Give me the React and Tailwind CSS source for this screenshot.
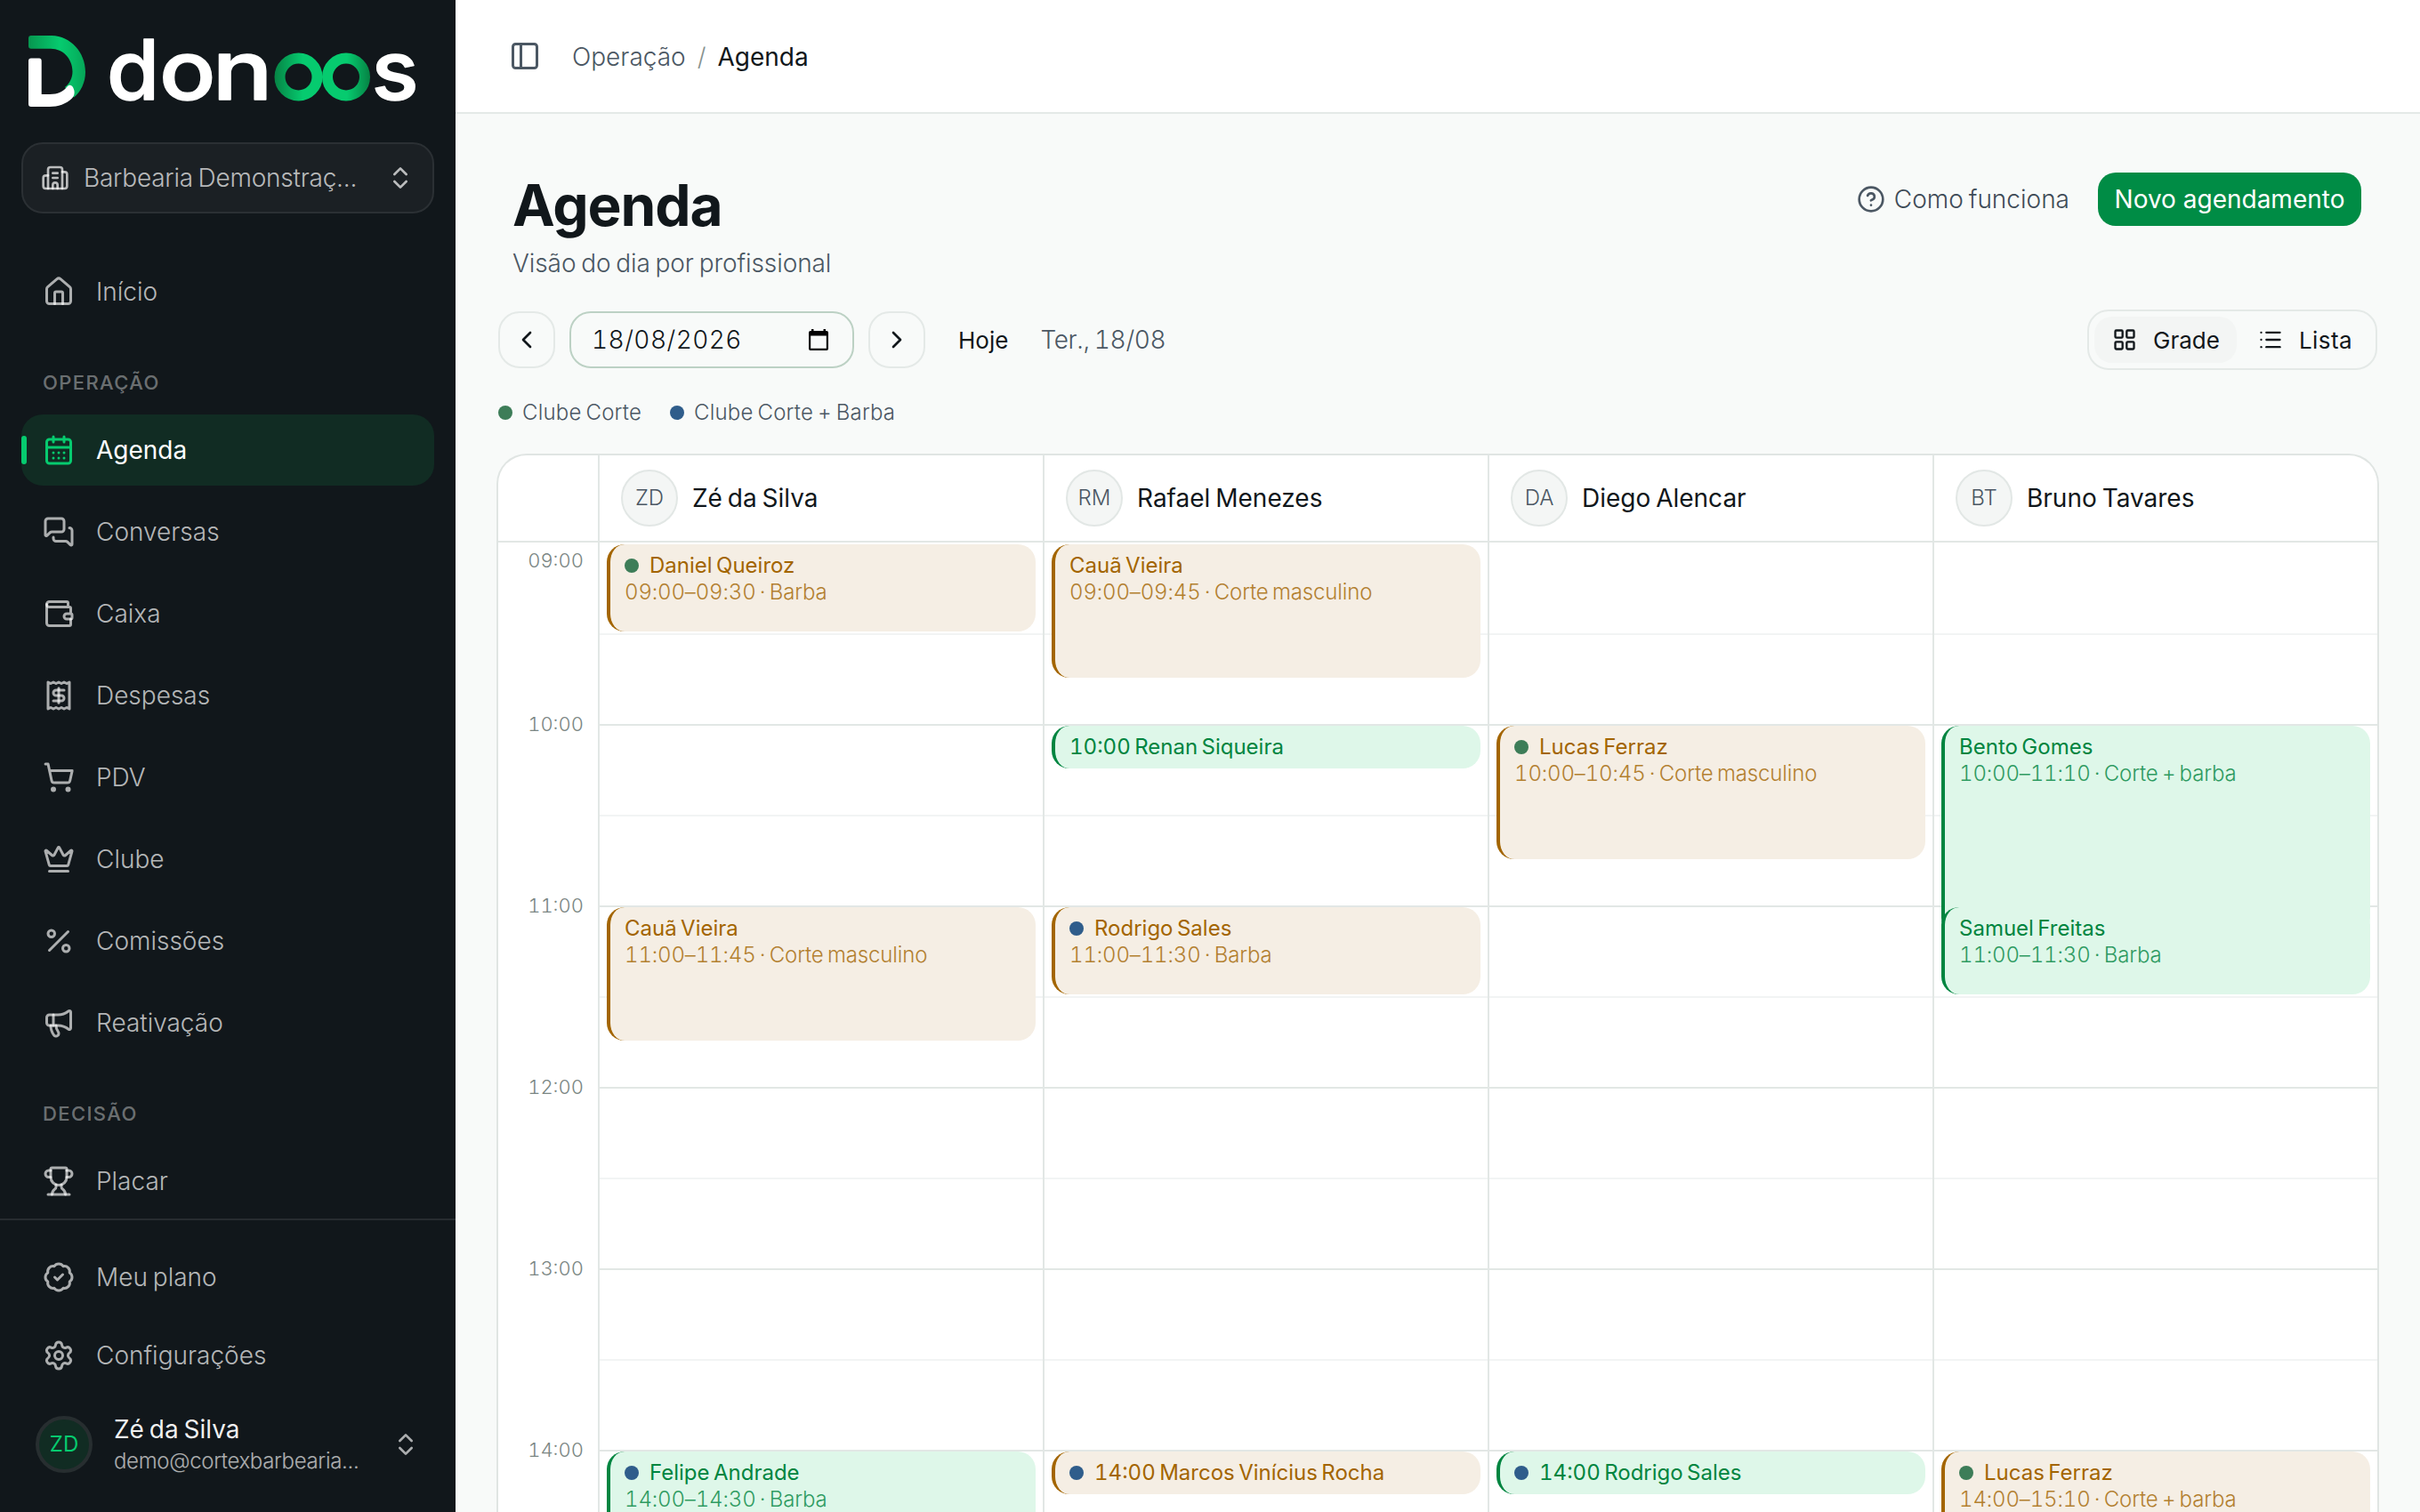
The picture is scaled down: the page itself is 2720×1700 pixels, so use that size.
import React from 'react';
import clsx from 'clsx';
import {
  BadgeCheck,
  Building2,
  CalendarDays,
  ChevronLeft,
  ChevronRight,
  ChevronsUpDown,
  CircleQuestionMark,
  Crown,
  House,
  LayoutGrid,
  List,
  Megaphone,
  MessagesSquare,
  PanelLeft,
  Percent,
  Receipt,
  Settings,
  ShoppingCart,
  Trophy,
  Wallet,
} from 'lucide-react';

const HOUR_HEIGHT = 204;
const START_HOUR = 9;

const hours = ['10:00', '11:00', '12:00', '13:00', '14:00'];

const operationItems = [
  { label: 'Agenda', icon: CalendarDays, active: true },
  { label: 'Conversas', icon: MessagesSquare },
  { label: 'Caixa', icon: Wallet },
  { label: 'Despesas', icon: Receipt },
  { label: 'PDV', icon: ShoppingCart },
  { label: 'Clube', icon: Crown },
  { label: 'Comissões', icon: Percent },
  { label: 'Reativação', icon: Megaphone },
];

const professionals = [
  {
    initials: 'ZD',
    name: 'Zé da Silva',
    events: [
      { start: 9, minutes: 30, tone: 'amber', dot: 'green', title: 'Daniel Queiroz', detail: '09:00–09:30 · Barba' },
      { start: 11, minutes: 45, tone: 'amber', title: 'Cauã Vieira', detail: '11:00–11:45 · Corte masculino' },
      { start: 14, minutes: 30, tone: 'green', dot: 'blue', title: 'Felipe Andrade', detail: '14:00–14:30 · Barba' },
    ],
  },
  {
    initials: 'RM',
    name: 'Rafael Menezes',
    events: [
      { start: 9, minutes: 45, tone: 'amber', title: 'Cauã Vieira', detail: '09:00–09:45 · Corte masculino' },
      { start: 10, minutes: 15, tone: 'green', title: '10:00 Renan Siqueira' },
      { start: 11, minutes: 30, tone: 'amber', dot: 'blue', title: 'Rodrigo Sales', detail: '11:00–11:30 · Barba' },
      { start: 14, minutes: 15, tone: 'amber', dot: 'blue', title: '14:00 Marcos Vinícius Rocha' },
    ],
  },
  {
    initials: 'DA',
    name: 'Diego Alencar',
    events: [
      { start: 10, minutes: 45, tone: 'amber', dot: 'green', title: 'Lucas Ferraz', detail: '10:00–10:45 · Corte masculino' },
      { start: 14, minutes: 15, tone: 'green', dot: 'blue', title: '14:00 Rodrigo Sales' },
    ],
  },
  {
    initials: 'BT',
    name: 'Bruno Tavares',
    events: [
      { start: 10, minutes: 70, tone: 'green', title: 'Bento Gomes', detail: '10:00–11:10 · Corte + barba' },
      { start: 11, minutes: 30, tone: 'green', title: 'Samuel Freitas', detail: '11:00–11:30 · Barba' },
      { start: 14, minutes: 70, tone: 'amber', dot: 'green', title: 'Lucas Ferraz', detail: '14:00–15:10 · Corte + barba' },
    ],
  },
];

const logoLetters = [
  { char: 'd', x: 120, stretch: 1.03 },
  { char: 'o', x: 179, stretch: 1.13 },
  { char: 'n', x: 238.5, stretch: 1.22 },
  { char: 's', x: 417.5, stretch: 1.06 },
];

function Logo() {
  return (
    <svg className="h-[120px] w-[448px]" viewBox="32 20 448 120" fill="none">
      <defs>
        <linearGradient id="mark" gradientUnits="userSpaceOnUse" x1="32" y1="0" x2="96" y2="0">
          <stop offset="0" stopColor="#07964f" />
          <stop offset="0.55" stopColor="#06cb6f" />
          <stop offset="0.8" stopColor="#06b863" />
          <stop offset="1" stopColor="#06a658" />
        </linearGradient>
        <linearGradient id="loop" gradientUnits="userSpaceOnUse" x1="308" y1="0" x2="416" y2="0">
          <stop offset="0" stopColor="#068244" />
          <stop offset="0.3" stopColor="#06cb6f" />
          <stop offset="0.76" stopColor="#06cb6f" />
          <stop offset="1" stopColor="#068244" />
        </linearGradient>
      </defs>
      <path
        d="M35 40H58C79.500 40.500 96 59 96 81C96 92.500 91 103 83 109.500L73 98C78 94 81.500 88 81.500 80.500C81.500 66 71 54.700 57 54.700H35Q32 54.700 32 51.700V43Q32 40 35 40Z"
        fill="url(#mark)"
      />
      <path
        d="M35 65.500H44Q46.700 65.500 46.700 68.500V106H56C65 106 71.500 102.500 75.500 97.500C77.500 94.800 80.500 95 82.200 98.500C84.500 103 84 107.500 81 110.500C74.500 117 65 120 56 120H35Q32 120 32 117V68.500Q32 65.500 35 65.500Z"
        fill="#fff"
      />
      {logoLetters.map((letter) => (
        <text
          key={letter.char}
          transform={`translate(${letter.x} 112.3) scale(${letter.stretch} 1)`}
          fill="#fff"
          stroke="#fff"
          strokeWidth="1.5"
          strokeLinejoin="round"
          fontSize="93"
          className="font-['Inter',sans-serif] font-medium"
        >
          {letter.char}
        </text>
      ))}
      <circle cx="335.500" cy="86.500" r="21" stroke="url(#loop)" strokeWidth="12" />
      <circle cx="389" cy="86.500" r="21" stroke="url(#loop)" strokeWidth="12" />
    </svg>
  );
}

function NavItem({ label, icon: Icon, active }) {
  return (
    <div
      className={clsx(
        'relative flex h-20 items-center gap-6 rounded-3xl px-6 text-[28px]',
        active ? 'bg-[#112c23] text-white' : 'font-light text-white/70'
      )}
    >
      {active && <span className="absolute top-6 left-0 h-8 w-1.5 rounded-full bg-[#06cb6f]" />}
      <Icon className={clsx('size-9', active ? 'text-[#06cb6f]' : 'text-white/65')} />
      <span>{label}</span>
    </div>
  );
}

function NavLabel({ children }) {
  return (
    <div className="mt-[38px] mb-3 flex h-12 items-center px-6 text-[22px] font-medium tracking-[0.063em] text-white/40">
      {children}
    </div>
  );
}

function Sidebar() {
  return (
    <aside className="flex h-full w-[512px] shrink-0 flex-col bg-[#11171b]">
      <div className="px-8 pt-5">
        <Logo />
      </div>

      <div className="mx-6 mt-5 flex h-20 items-center rounded-3xl border-2 border-[#2b3034] bg-[#1b2024] px-5 text-white/70">
        <Building2 className="size-8" />
        <span className="ml-4 flex-1 text-[28px] font-[350] tracking-[-0.008em]">Barbearia Demonstraç...</span>
        <ChevronsUpDown className="size-8" />
      </div>

      <nav className="mt-12 flex flex-1 flex-col px-6">
        <NavItem label="Início" icon={House} />
        <NavLabel>OPERAÇÃO</NavLabel>
        <div className="flex flex-col gap-3">
          {operationItems.map((item) => (
            <NavItem key={item.label} {...item} />
          ))}
        </div>
        <NavLabel>DECISÃO</NavLabel>
        <NavItem label="Placar" icon={Trophy} />
      </nav>

      <div className="flex h-[330px] shrink-0 flex-col gap-2 border-t-2 border-[#272c30] px-6 pt-6">
        <NavItem label="Meu plano" icon={BadgeCheck} />
        <NavItem label="Configurações" icon={Settings} />
        <div className="mt-0.5 flex h-[100px] items-center px-4">
          <div className="flex size-16 items-center justify-center rounded-full border-4 border-[#272e30] bg-[#112c23] text-2xl text-[#06cb6f]">
            ZD
          </div>
          <div className="ml-6 flex-1">
            <div className="text-[28px] leading-[37px] text-white/95">Zé da Silva</div>
            <div className="text-2xl leading-[33px] font-light tracking-[-0.014em] text-white/65">
              demo@cortexbarbearia...
            </div>
          </div>
          <ChevronsUpDown className="size-8 text-white/65" />
        </div>
      </div>
    </aside>
  );
}

function Topbar() {
  return (
    <header className="flex h-32 shrink-0 items-center border-b-2 border-[#e4e9e7] bg-white pl-[60px] text-[28px]">
      <PanelLeft className="size-9 text-[#4b5763]" />
      <div className="ml-[35px] flex items-center gap-[13px] pt-0.5">
        <span className="font-light text-[#4b5763]">Operação</span>
        <span className="font-light text-[#87928f]">/</span>
        <span>Agenda</span>
      </div>
    </header>
  );
}

function PageHeader() {
  return (
    <div className="flex items-start justify-between pr-[18px] pl-4">
      <div>
        <h1 className="text-[64px] leading-[80px] font-bold tracking-[-0.017em]">Agenda</h1>
        <p className="mt-px text-[28px] leading-[48px] font-light tracking-[-0.003em] text-[#4b5763]">
          Visão do dia por profissional
        </p>
      </div>
      <div className="mt-[3px] flex h-[60px] items-center text-[28px]">
        <CircleQuestionMark className="size-8 text-[#4b5763]" />
        <span className="mr-8 ml-[10px] font-light text-[#3f4b57]">Como funciona</span>
        <button className="flex h-[60px] w-[296px] items-center justify-center rounded-[20px] bg-[#008c45] text-white">
          Novo agendamento
        </button>
      </div>
    </div>
  );
}

// same glyph the browser paints inside a date input
function DatePickerIcon() {
  return (
    <svg className="h-6 w-[22px]" viewBox="0 0 22 24" fill="#000">
      <path
        fillRule="evenodd"
        d="M3 0H5.500V2H16.500V0H19V2H20Q22 2 22 4V22Q22 24 20 24H2Q0 24 0 22V4Q0 2 2 2H3ZM2.200 7.500V21.800H19.800V7.500Z"
      />
    </svg>
  );
}

function Toolbar() {
  return (
    <div className="mt-7 flex h-[68px] items-center justify-between">
      <div className="flex items-center gap-4">
        <button className="flex size-16 items-center justify-center rounded-3xl border-2 border-[#e4e9e7]">
          <ChevronLeft className="size-8" />
        </button>
        <div className="flex h-16 w-80 items-center justify-between rounded-3xl border-2 border-[#bcd1c4] pr-[27px] pl-[23px]">
          <span className="text-[28px] font-[350] tracking-[0.016em] tabular-nums">18/08/2026</span>
          <DatePickerIcon />
        </div>
        <button className="flex size-16 items-center justify-center rounded-3xl border-2 border-[#e4e9e7]">
          <ChevronRight className="size-8" />
        </button>
        <button className="pr-5 pl-[21px] text-[26px]">Hoje</button>
        <span className="text-[28px] font-light tracking-[-0.012em] text-[#4b5763] tabular-nums">Ter., 18/08</span>
      </div>

      <div className="flex h-[68px] w-[326px] items-center gap-1 rounded-3xl border-2 border-[#e4e9e7] px-1.5 text-[26px]">
        <button className="flex h-[52px] w-40 items-center gap-[18px] rounded-[20px] bg-[#f3f5f4] pl-5">
          <LayoutGrid className="size-7 shrink-0" />
          <span>Grade</span>
        </button>
        <button className="flex h-[52px] flex-1 items-center gap-[18px] pl-5">
          <List className="size-7 shrink-0" />
          <span className="tracking-[0.015em]">Lista</span>
        </button>
      </div>
    </div>
  );
}

function Dot({ color }) {
  return (
    <span className={clsx('size-4 shrink-0 rounded-full', color === 'green' ? 'bg-[#3d7d58]' : 'bg-[#2f5d8b]')} />
  );
}

function Legend() {
  return (
    <div className="my-8 flex h-8 items-center gap-8 text-2xl font-light tracking-[0.008em] text-[#4b5763]">
      <div className="flex items-center gap-[11px]">
        <Dot color="green" />
        Clube Corte
      </div>
      <div className="flex items-center gap-[11px]">
        <Dot color="blue" />
        Clube Corte + Barba
      </div>
    </div>
  );
}

function EventCard({ event }) {
  const amber = event.tone === 'amber';
  const top = (event.start - START_HOUR) * HOUR_HEIGHT + 2;
  const height = Math.ceil(((event.minutes / 60) * HOUR_HEIGHT - 4) / 2) * 2;

  return (
    <div
      className={clsx(
        'absolute inset-x-2 overflow-hidden rounded-[20px] border-l-4 pt-[9px] pl-4 text-2xl leading-[30px] tabular-nums',
        amber ? 'border-[#a36500] bg-[#f5eee4] text-[#a36500]' : 'border-[#008540] bg-[#def7e9] text-[#008540]'
      )}
      style={{ top, height }}
    >
      <div className="flex items-center gap-3">
        {event.dot && <Dot color={event.dot} />}
        {event.title}
      </div>
      {event.detail && <div className="font-light tracking-[-0.006em] opacity-80">{event.detail}</div>}
    </div>
  );
}

function Schedule() {
  return (
    <div className="flex rounded-t-[32px] bg-white ring-2 ring-[#e0e5e3]">
      <div className="w-28 shrink-0">
        <div className="h-[98px] border-b-2 border-[#e2e7e5]" />
        <div className="pr-4 text-right text-[22px] font-light text-[#7a8683] tabular-nums">
          <div className="h-[102px] leading-[40px]">09:00</div>
          {hours.map((hour) => (
            <div key={hour} className="h-[204px] leading-[204px]">
              {hour}
            </div>
          ))}
        </div>
      </div>

      {professionals.map((pro) => (
        <div key={pro.initials} className="flex-1 border-l-2 border-[#e2e7e5]">
          <div className="flex h-[98px] items-center gap-4 border-b-2 border-[#e2e7e5] pl-6">
            <div className="flex size-16 items-center justify-center rounded-full border-2 border-[#e2e7e5] bg-[#f4f6f5] text-2xl font-light text-[#4b5763]">
              {pro.initials}
            </div>
            <span className="text-[28px]">{pro.name}</span>
          </div>
          <div className="relative">
            <div className="h-[102px]" />
            {hours.map((hour) => (
              <div key={hour} className="h-[204px] border-t-2 border-[#f2f4f4] pt-[100px]">
                <div className="border-t-2 border-[#e2e7e5]" />
              </div>
            ))}
            {pro.events.map((event) => (
              <EventCard key={event.start} event={event} />
            ))}
          </div>
        </div>
      ))}
    </div>
  );
}

export default function App() {
  return (
    <div className="flex h-[1700px] w-[2720px] overflow-hidden bg-[#f8faf9] font-['Inter',sans-serif] text-[#11171b] [word-spacing:-0.125em]">
      <Sidebar />
      <div className="flex min-w-0 flex-1 flex-col">
        <Topbar />
        <main className="min-h-0 flex-1 overflow-hidden px-12 pt-[63px]">
          <PageHeader />
          <Toolbar />
          <Legend />
          <Schedule />
        </main>
      </div>
    </div>
  );
}
